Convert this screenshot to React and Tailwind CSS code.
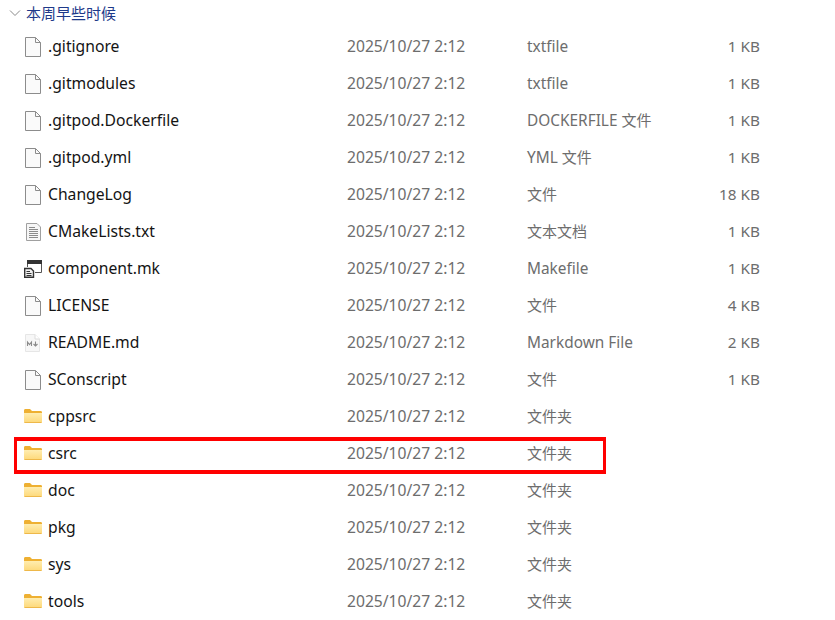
const rows = [
  { name: '.gitignore', type: 'txtfile', size: '1 KB', icon: 'file' },
  { name: '.gitmodules', type: 'txtfile', size: '1 KB', icon: 'file' },
  { name: '.gitpod.Dockerfile', type: 'DOCKERFILE 文件', size: '1 KB', icon: 'file' },
  { name: '.gitpod.yml', type: 'YML 文件', size: '1 KB', icon: 'file' },
  { name: 'ChangeLog', type: '文件', size: '18 KB', icon: 'file' },
  { name: 'CMakeLists.txt', type: '文本文档', size: '1 KB', icon: 'text' },
  { name: 'component.mk', type: 'Makefile', size: '1 KB', icon: 'make' },
  { name: 'LICENSE', type: '文件', size: '4 KB', icon: 'file' },
  { name: 'README.md', type: 'Markdown File', size: '2 KB', icon: 'md' },
  { name: 'SConscript', type: '文件', size: '1 KB', icon: 'file' },
  { name: 'cppsrc', type: '文件夹', size: '', icon: 'folder' },
  { name: 'csrc', type: '文件夹', size: '', icon: 'folder', marked: true },
  { name: 'doc', type: '文件夹', size: '', icon: 'folder' },
  { name: 'pkg', type: '文件夹', size: '', icon: 'folder' },
  { name: 'sys', type: '文件夹', size: '', icon: 'folder' },
  { name: 'tools', type: '文件夹', size: '', icon: 'folder' },
];

const FileIcon = () => (
  <svg className="ml-[2px]" width="16" height="20" viewBox="0 0 16 20" fill="none">
    <path d="M0.5 0.5H10.5L15.5 5.5V19.5H0.5Z" fill="#fafafa" stroke="#8c8c8c" />
    <path d="M10.5 0.5V5.5H15.5" stroke="#8c8c8c" />
  </svg>
);

const TextIcon = () => (
  <svg className="ml-[3px]" width="15" height="18" viewBox="0 0 15 18" fill="none">
    <path d="M0.5 0.5H11L14.5 4V17.5H0.5Z" fill="#f6f6f6" stroke="#a0a0a0" />
    <path d="M3 4.5H9M3 6.5H12M3 8.5H12M3 10.5H12M3 12.5H12M3 14.5H12" stroke="#8a8a8a" />
  </svg>
);

const MakeIcon = () => (
  <svg className="ml-[1px]" width="18" height="18" viewBox="0 0 18 18" fill="none">
    <path d="M3.5 0.5H17.5V12.5H11" fill="#fff" stroke="#555" />
    <rect x="3" y="0" width="15" height="4" fill="#333" />
    <path d="M3.5 4V7" stroke="#555" />
    <path d="M0.7 8.5H7L9.5 11V17.3H0.7Z" fill="#f2f2f2" stroke="#333" strokeWidth="1.4" />
    <path d="M2.5 11.5H6M2.5 13.5H7.5M2.5 15.5H7.5" stroke="#333" />
  </svg>
);

const MdIcon = () => (
  <svg className="ml-[2px]" width="15" height="18" viewBox="0 0 15 18" fill="none">
    <path d="M0.5 0.5H10L14.5 5V17.5H0.5Z" fill="#f7f7f7" stroke="#e6e6e6" />
    <path d="M10 0.5V5H14.5" fill="#fff" stroke="#dcdcdc" />
    <path d="M2.5 12V8L4.5 10.5L6.5 8V12" stroke="#8a8a8a" strokeWidth="1.1" />
    <path d="M10.5 7.5V11.5M8.5 10L10.5 12L12.5 10" stroke="#8a8a8a" strokeWidth="1.1" />
  </svg>
);

const FolderIcon = () => (
  <svg className="ml-[1px] mt-[-1px]" width="18" height="14" viewBox="0 0 18 14" fill="none">
    <defs>
      <linearGradient id="folderFill" x1="0" y1="0" x2="0" y2="1">
        <stop offset="0" stopColor="#ffedb0" />
        <stop offset="1" stopColor="#fdd878" />
      </linearGradient>
    </defs>
    <path d="M0 1.5C0 0.6 0.5 0 1.5 0H6L8 2H16.5C17.5 2 18 2.5 18 3.5V5H0Z" fill="#eeb032" />
    <path d="M0 4H18V12.5C18 13.5 17.5 14 16.5 14H1.5C0.5 14 0 13.5 0 12.5Z" fill="url(#folderFill)" />
    <path d="M0.5 13.5H17.5" stroke="#eeb84a" />
  </svg>
);

const icons = { file: FileIcon, text: TextIcon, make: MakeIcon, md: MdIcon, folder: FolderIcon };

// CJK stays at 15px, latin runs a touch bigger to match the wider UI font
const TypeLabel = ({ text }) =>
  text.split(/([\u4e00-\u9fff]+)/).filter(Boolean).map((part, i) => (
    <span key={i} className={/[\u4e00-\u9fff]/.test(part) ? 'text-[15px]' : 'text-[15.4px]'}>{part}</span>
  ));

const Row = ({ name, type, size, icon, marked }) => {
  const Icon = icons[icon];
  return (
    <div className="relative flex h-[37px] items-center">
      <div className="ml-[23px] flex w-[25px] shrink-0 items-center"><Icon /></div>
      <div className="w-[299px] shrink-0 text-[15.7px] text-[#141414]">{name}</div>
      <div className="w-[180px] shrink-0 text-[15.65px] text-[#6d6d6d]">2025/10/27 2:12</div>
      <div className="w-[160px] shrink-0 text-[#6d6d6d]"><TypeLabel text={type} /></div>
      <div className="w-[73px] shrink-0 text-right text-[15.3px] text-[#6d6d6d]">{size}</div>
      {marked && <div className="absolute top-[2px] left-[14px] h-[37px] w-[592px] border-x-[3px] border-y-[4px] border-[#ff0000]" />}
    </div>
  );
};

export default function App() {
  return (
    <div className="h-[620px] w-[835px] overflow-hidden bg-white font-['Noto_Sans','Noto_Sans_CJK_SC',sans-serif] text-[15px]">
      <div className="flex h-[28px] items-center pb-[2px]">
        <svg className="ml-[9px]" width="12" height="8" viewBox="0 0 12 8" fill="none">
          <path d="M1 1.5L6 6.5L11 1.5" stroke="#8a8a8a" />
        </svg>
        <span className="ml-[5px] text-[15px] text-[#1e3a8a]">本周早些时候</span>
      </div>
      {rows.map((r) => <Row key={r.name} {...r} />)}
    </div>
  );
}
